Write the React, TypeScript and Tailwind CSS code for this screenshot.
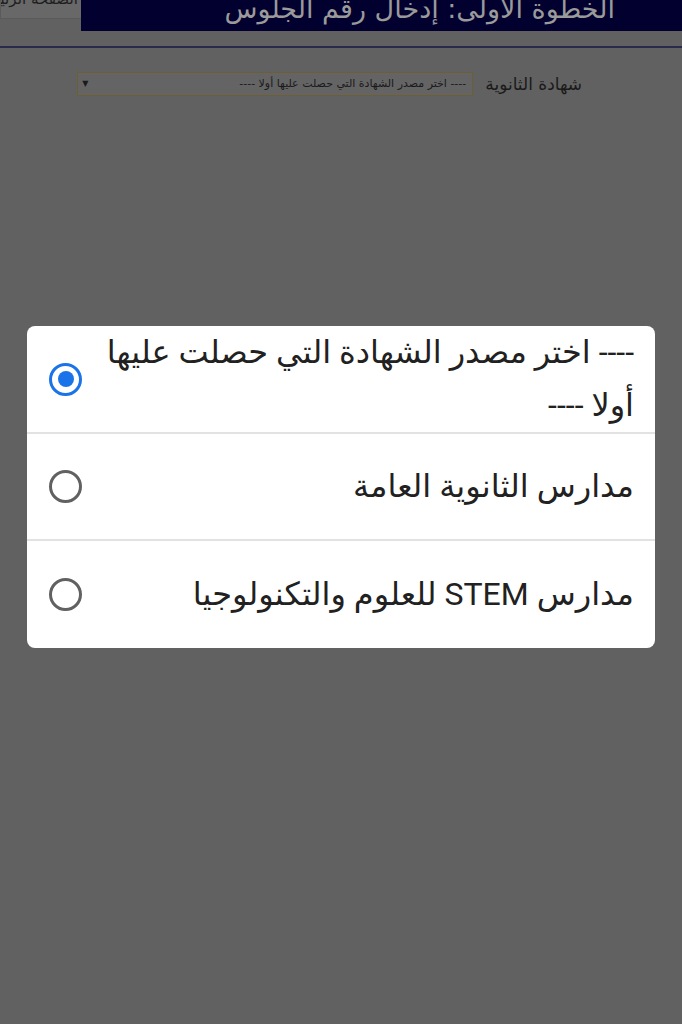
import React from "react";

const options = [
  "---- اختر مصدر الشهادة التي حصلت عليها أولا ----",
  "مدارس الثانوية العامة",
  "مدارس STEM للعلوم والتكنولوجيا",
];

const Radio = ({ checked }: { checked: boolean }) => (
  <span
    className={
      checked
        ? "flex h-[33px] w-[33px] shrink-0 items-center justify-center rounded-full border-[3px] border-[#1a73e8]"
        : "flex h-[33px] w-[33px] shrink-0 items-center justify-center rounded-full border-[3px] border-[#616161]"
    }
  >
    {checked && <span className="h-[16px] w-[16px] rounded-full bg-[#1a73e8]" />}
  </span>
);

const App = () => {
  const selected = 0;

  return (
    <div
      dir="rtl"
      className="relative h-[1024px] w-full overflow-hidden bg-[#616161]"
      style={{ fontFamily: '"DejaVu Sans", "Liberation Sans", sans-serif' }}
    >
      {/* page behind the dialog (already dimmed) */}
      <div className="-mt-[20px] flex flex-row-reverse items-start">
        <div className="flex h-[39px] w-[81px] shrink-0 items-start justify-start overflow-hidden border-b border-l border-[#5a5a5a] bg-[#686868] pr-[3px] pt-[12px] text-[15px] leading-none whitespace-nowrap text-[#1e1e1e]">
          الصفحة الرئيسية
        </div>
        <div className="flex h-[51px] min-w-0 flex-1 items-end justify-start overflow-hidden bg-[#02002e] pr-[67px] pb-[9px] text-[27px] leading-none whitespace-nowrap text-[#9a9a9a]">
          الخطوة الأولى: إدخال رقم الجلوس
        </div>
      </div>
      <div className="mt-[15px] h-[2px] w-full bg-[#2a2a4c]" />

      <div className="mt-[24px] flex items-center pr-[100px]">
        <span className="text-[17px] leading-none text-[#1a1a1a]">شهادة الثانوية</span>
        <div className="mr-[12px] flex h-[24px] w-[396px] items-center justify-between border border-[#6e5e34] bg-[#646464] px-[4px] text-[11px] text-[#1a1a1a]">
          <span className="pr-[2px]">---- اختر مصدر الشهادة التي حصلت عليها أولا ----</span>
          <span className="text-[8px]">▼</span>
        </div>
      </div>

      {/* selection dialog */}
      <div className="absolute top-[326px] left-[27px] w-[628px] overflow-hidden rounded-[8px] bg-white">
        {options.map((opt, i) => (
          <div
            key={opt}
            className={
              i < options.length - 1
                ? "flex min-h-[107px] items-center gap-[18px] border-b-2 border-[#e2e2e2] pr-[21px] pl-[22px]"
                : "flex min-h-[107px] items-center gap-[18px] pr-[21px] pl-[22px]"
            }
          >
            <span
              className="flex-1 text-right text-[32px] leading-[53px] text-[#212121]"
              style={{ fontFamily: 'Roboto, "DejaVu Sans", sans-serif' }}
            >
              {opt}
            </span>
            <Radio checked={i === selected} />
          </div>
        ))}
      </div>
    </div>
  );
};

export default App;
